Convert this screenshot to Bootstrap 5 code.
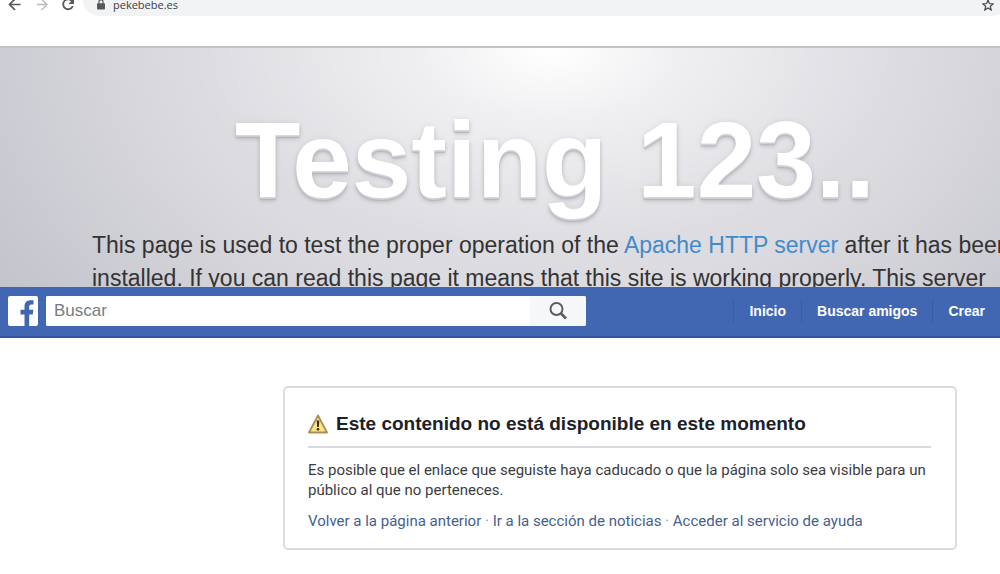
<!DOCTYPE html>
<html lang="es">
<head>
<meta charset="utf-8">
<meta name="viewport" content="width=device-width, initial-scale=1">
<title>pekebebe.es</title>
<link href="https://cdn.jsdelivr.net/npm/bootstrap@5.3.0/dist/css/bootstrap.min.css" rel="stylesheet">
<style>
  body { font-family: "Liberation Sans", Arial, sans-serif; background: #fff; overflow-x: hidden; }
  svg { display: block; flex: none; }

  .browser-bar { height: 46px; overflow: hidden; }
  .browser-bar .tool { border: 0; background: none; padding: 0; color: #55585c; }
  .browser-bar .tool:disabled { color: #b9bbbe; }
  .address { height: 32px; margin: -16px -8px 0 0; border-radius: 16px; background: #f1f3f4; padding: 10px 14px 0 10px; }
  .address input { border: 0; background: none; padding: 0; min-width: 0; height: 22px; font: 11px/22px "Open Sans", sans-serif; color: #3c4043; outline: 0; }

  .hero { height: 241px; overflow: hidden; border-top: 2px solid #c4c4c6;
    background:
      radial-gradient(ellipse 360px 200px at 55% 0, #fff 0, rgba(255,255,255,.5) 35%, rgba(255,255,255,0) 100%),
      radial-gradient(ellipse 660px 440px at 55% 0, #e4e4e8 0, #dbdbe0 55%, #c3c3cc 100%); }
  .hero-inner { margin: 0 -18px 0 92px; padding-top: 46px; }
  .hero h1 { font-size: 107px; line-height: 132px; font-weight: 700; color: #fff; white-space: nowrap; margin-bottom: 3px;
    text-shadow: 0 1px 0 #d6d9de, 0 2px 0 #c8ccd2, 0 3px 1px #b4b8be, 0 4px 4px rgba(0,0,0,.15), 0 0 6px rgba(0,0,0,.08); }
  .hero p { font-size: 23px; line-height: 33px; color: #333; white-space: nowrap; }
  .hero a { color: #428bca; }

  .fb-bar { height: 51px; background: #4267b2; border-bottom: 2px solid #35549a; padding: 0 0 2px 8px; }
  .search-box { width: 540px; height: 30px; margin-left: 8px; border-radius: 2px; overflow: hidden; background: #fff; }
  .search-box input { border: 0; padding: 0 8px; font-size: 17px; color: #4b4f56; outline: 0; min-width: 0; }
  .search-box input::placeholder { color: #777b82; opacity: 1; }
  .search-box button { border: 0; width: 56px; background: #f6f7f9; color: #5a5d63; }
  .fb-links a { color: #fff; font-size: 14px; line-height: 24px; font-weight: 700; padding: 0 15px; border-left: 1px solid #3a5ca2; white-space: nowrap; }

  .notice { width: 674px; margin: 48px 43px 0 auto; border: 2px solid #dcdcde; border-radius: 5px; padding: 22px 24px 17px 23px; }
  .notice h2 { font-size: 19px; line-height: 28px; font-weight: 700; color: #1d2129; padding-bottom: 8px; margin-bottom: 12px; border-bottom: 2px solid #d8dade; white-space: nowrap; }
  .notice p { font-family: Roboto, sans-serif; font-size: 15px; line-height: 20px; color: #3a3d42; margin-bottom: 11px; }
  .notice .links { color: #90949c; margin: 0; white-space: nowrap; }
  .notice a { color: #465f8c; }
</style>
</head>
<body>
<header class="browser-bar d-flex align-items-start">
  <button class="tool ms-2" aria-label="Atrás"><svg width="13" height="12" viewBox="0 0 13 12" fill="none" stroke="currentColor" stroke-width="1.7"><path d="M12.500 4.500H1.500M7 -1L1.500 4.500L7 10"/></svg></button>
  <button class="tool ms-3" aria-label="Adelante" disabled><svg width="13" height="12" viewBox="0 0 13 12" fill="none" stroke="currentColor" stroke-width="1.400"><path d="M-1 4.500H10M4.500 -1L10 4.500L4.500 10"/></svg></button>
  <button class="tool ms-2 ps-1" aria-label="Recargar"><svg width="13" height="12" viewBox="0 0 13 12" fill="none" stroke="currentColor" stroke-width="1.800"><path d="M10 1A5 5 0 1 0 10.800 6.200"/><path d="M12 -2V4H6.500z" fill="currentColor" stroke="none"/></svg></button>
  <div class="address d-flex align-items-center flex-grow-1 ms-2">
    <svg class="ms-1" width="8" height="12" viewBox="0 0 9 12" fill="#55585c"><path d="M1 4h7a1 1 0 0 1 1 1v5a1 1 0 0 1-1 1H1a1 1 0 0 1-1-1V5a1 1 0 0 1 1-1z"/><path d="M2.200 5V2.500a2.300 2.300 0 0 1 4.600 0V5" fill="none" stroke="#55585c" stroke-width="1.300"/></svg>
    <input class="flex-grow-1 ms-2" type="text" value="pekebebe.es" aria-label="Dirección">
    <button class="tool" aria-label="Añadir a favoritos"><svg width="12" height="12" viewBox="0 0 12 12" fill="none" stroke="#45484c" stroke-width="1.200"><path d="M6 1L7.400 4.500L11.200 4.800L8.300 7.200L9.200 11L6 9L2.800 11L3.700 7.200L.8 4.800L4.600 4.500z"/></svg></button>
  </div>
</header>

<section class="hero">
  <div class="hero-inner">
    <h1 class="text-center">Testing 123..</h1>
    <p class="mb-0">This page is used to test the proper operation of the <a class="text-decoration-none" href="#">Apache HTTP server</a> after it has been<br>installed. If you can read this page it means that this site is working properly. This server</p>
  </div>
</section>

<nav class="fb-bar d-flex align-items-center">
  <a href="#" aria-label="Facebook"><svg width="30" height="30" viewBox="0 0 30 30"><rect width="30" height="30" rx="2" fill="#fff"/><path d="M16.500 30V18.500H12.500V13.700H16.500V10.500C16.500 6.300 19 4.300 22.500 4.300H25.500V8.600H23.500C21.600 8.600 21.200 9.500 21.200 11V13.700H25.400L24.800 18.500H21.200V30z" fill="#4267b2"/></svg></a>
  <form class="search-box d-flex">
    <input class="flex-grow-1" type="text" placeholder="Buscar" aria-label="Buscar">
    <button class="d-flex align-items-center justify-content-center p-0" type="button" aria-label="Buscar"><svg width="20" height="20" viewBox="0 0 20 20" fill="none" stroke="currentColor" stroke-width="2"><circle cx="8.500" cy="8" r="6"/><path d="M13 12.500L18 17.500" stroke-width="2.600"/></svg></button>
  </form>
  <div class="fb-links d-flex ms-auto">
    <a class="text-decoration-none" href="#">Inicio</a>
    <a class="text-decoration-none" href="#">Buscar amigos</a>
    <a class="text-decoration-none" href="#">Crear</a>
  </div>
</nav>

<main class="notice">
  <h2 class="d-flex align-items-center"><svg class="me-2" width="20" height="20" viewBox="0 0 20 20"><path d="M10 1.500L19 18.500H1z" fill="#fbe58a" stroke="#a88f52" stroke-width="1.800" stroke-linejoin="round"/><path d="M8.700 6.500h2.600L10.800 13H9.200z" fill="#3a2a12"/><circle cx="10" cy="15.300" r="1.300" fill="#3a2a12"/></svg>Este contenido no está disponible en este momento</h2>
  <p>Es posible que el enlace que seguiste haya caducado o que la página solo sea visible para un público al que no perteneces.</p>
  <p class="links"><a class="text-decoration-none" href="#">Volver a la página anterior</a> · <a class="text-decoration-none" href="#">Ir a la sección de noticias</a> · <a class="text-decoration-none" href="#">Acceder al servicio de ayuda</a></p>
</main>
<script src="https://cdn.jsdelivr.net/npm/bootstrap@5.3.0/dist/js/bootstrap.bundle.min.js"></script>
</body>
</html>
